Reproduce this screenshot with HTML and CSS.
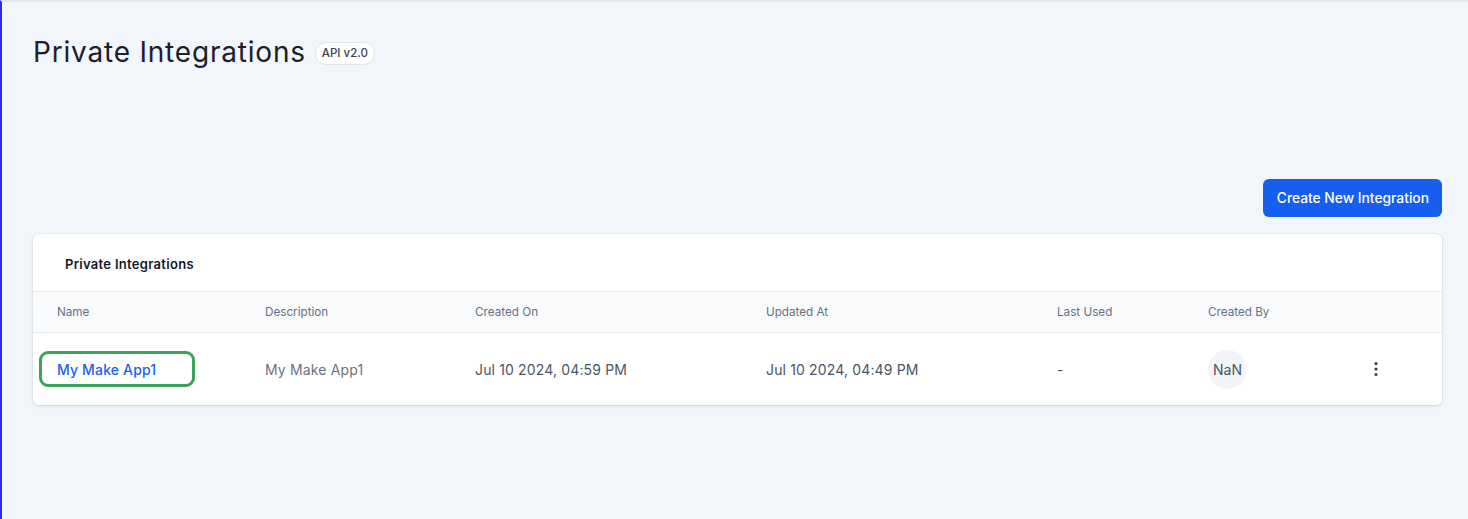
FILE: index.html
```html
<!DOCTYPE html>
<html>
<head>
<meta name="viewport" content="width=device-width, initial-scale=1">
<link rel="stylesheet" href="styles.css">
</head>
<body>

<div class="page">
  <div class="title-row">
    <h1 class="title">Private Integrations</h1>
    <span class="badge">API v2.0</span>
  </div>

  <div class="actions">
    <div class="btn-primary">Create New Integration</div>
  </div>

  <div class="card">
    <div class="card-header">Private Integrations</div>
    <div class="table">
      <div class="row head">
        <div class="cell">Name</div>
        <div class="cell">Description</div>
        <div class="cell">Created On</div>
        <div class="cell">Updated At</div>
        <div class="cell">Last Used</div>
        <div class="cell">Created By</div>
        <div class="cell"></div>
      </div>
      <div class="row body">
        <div class="cell name">
          <span class="link">My Make App1</span>
          <span class="highlight"></span>
        </div>
        <div class="cell muted">My Make App1</div>
        <div class="cell">Jul 10 2024, 04:59 PM</div>
        <div class="cell">Jul 10 2024, 04:49 PM</div>
        <div class="cell">-</div>
        <div class="cell"><span class="avatar">NaN</span></div>
        <div class="cell menu">
          <svg width="4" height="16" viewBox="0 0 4 16"><circle cx="2" cy="2.5" r="1.6" fill="#374151"/><circle cx="2" cy="8" r="1.6" fill="#374151"/><circle cx="2" cy="13.5" r="1.6" fill="#374151"/></svg>
        </div>
      </div>
    </div>
  </div>
</div>

</body>
</html>
```

FILE: styles.css
```css
* {
  box-sizing: border-box;
}

html, body {
  margin: 0;
  height: 100%;
}

body {
  background-color: #f2f6fa;
  font-family: Inter, "Noto Sans", sans-serif;
  color: #111827;
  border-left: 2px solid #2a2cf0;
  border-top: 2px solid #e3e6ea;
}

.page {
  padding: 32px 26px 0 31px;
}

.title-row {
  display: flex;
  align-items: center;
  gap: 9px;
}

.title {
  margin: 0;
  font-size: 28px;
  font-weight: 400;
  line-height: 36px;
  color: #1a202c;
  letter-spacing: 0.8px;
}

.badge {
  font-size: 11.5px;
  font-weight: 500;
  color: #374151;
  background: #fff;
  border: 1px solid #e1e4e8;
  border-radius: 11px;
  padding: 3px 6px;
  line-height: 15px;
  margin-top: 2px;
}

.actions {
  display: flex;
  justify-content: flex-end;
  margin-top: 109px;
}

.btn-primary {
  background-color: #155eef;
  color: white;
  font-size: 13.8px;
  font-weight: 500;
  height: 38px;
  line-height: 38px;
  padding: 0 13px 0 14px;
  border-radius: 6px;
  cursor: pointer;
}

.card {
  margin-top: 17px;
  background: #fff;
  border-radius: 6px;
  box-shadow: 0 1px 3px rgba(16, 24, 40, 0.12), 0 0 0 1px rgba(16, 24, 40, 0.03);
}

.card-header {
  height: 57px;
  line-height: 60px;
  padding-left: 32px;
  font-size: 13px;
  font-weight: 600;
  color: #111827;
  letter-spacing: 0.3px;
}

.row {
  display: grid;
  grid-template-columns: 208px 210px 291px 291px 151px 150px 1fr;
  align-items: center;
}

.cell {
  padding-left: 24px;
}

.head {
  height: 42px;
  background: #f9fafb;
  border-top: 1px solid #eaecf0;
  border-bottom: 1px solid #eaecf0;
  font-size: 11.7px;
  color: #667085;
}

.body {
  height: 72px;
  font-size: 14px;
  color: #4b5563;
  letter-spacing: 0.15px;
}

.muted {
  color: #6b7280;
}

.name {
  position: relative;
}

.link {
  color: #1d5ff0;
  font-weight: 500;
}

.highlight {
  position: absolute;
  left: 6px;
  top: -10px;
  width: 156px;
  height: 36px;
  border: 3px solid #3aa35a;
  border-radius: 9px;
}

.avatar {
  display: inline-flex;
  align-items: center;
  justify-content: center;
  width: 39px;
  height: 39px;
  border-radius: 50%;
  background: #f2f4f7;
  color: #4b5563;
  letter-spacing: 0;
}

.menu {
  padding-left: 40px;
  display: flex;
  align-items: center;
}
```
